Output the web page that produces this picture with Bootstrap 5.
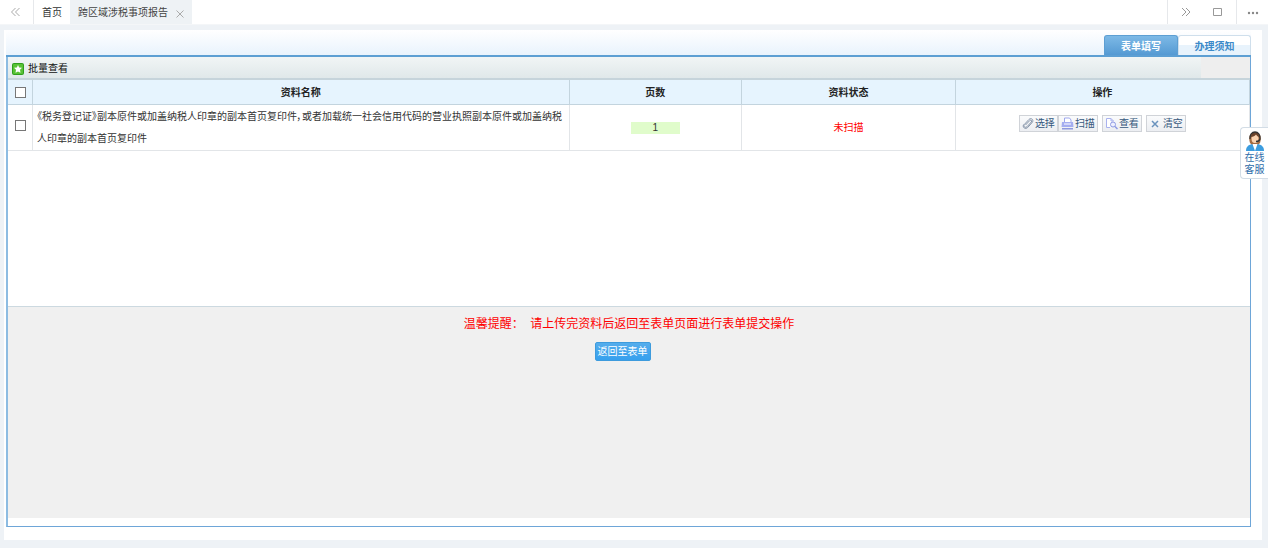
<!DOCTYPE html>
<html lang="zh-CN">
<head>
<meta charset="utf-8">
<meta name="viewport" content="width=device-width, initial-scale=1">
<title>跨区域涉税事项报告</title>
<link href="https://cdn.jsdelivr.net/npm/bootstrap@5.3.0/dist/css/bootstrap.min.css" rel="stylesheet">
<style>
body{font-family:"Liberation Sans","Noto Sans CJK SC",sans-serif;font-size:10px;line-height:16px;color:#333;background:#eef2f6}
a{text-decoration:none;color:inherit}
.plain-btn{border:0;background:none;padding:0;color:#999;line-height:0}
.top-bar{height:25px;border-bottom:1px solid #f4f6f8}
.top-bar .slot{border-color:#e6e8eb!important}
.top-tab{padding-top:2px}
.top-tab.current{background:#eef2f5;color:#444}
.panel{margin:5px 6px 0 4px;padding:0 11px 13px 2px}
.tab-strip{height:27px;padding-top:5px;background:linear-gradient(#fff,#e9f3fd);border-bottom:2px solid #5d9fd3}
.form-tab{width:73px;border:1px solid #cfdfec;border-bottom:0;border-radius:3px 3px 0 0;font-weight:700;line-height:22px;color:#3c8ac9;background:linear-gradient(#fff 45%,#e8f3fc 50%)}
.form-tab.current{width:74px;border-color:#5d9fd3;color:#fff;background:linear-gradient(#7db9e6,#559ad3)}
.frame{border:1px solid #6ea6d8;border-left-width:2px;border-left-color:#8dbce2;border-top:0;padding-bottom:8px}
.tools{height:23px;background:linear-gradient(#f1f5f5,#e0e8ea);border-bottom:2px solid #c6d4db;color:#111}
.tools .plain-btn{padding-top:2px}
.tools .rest{width:49px;background:#eee}
.list-area{height:227px;border-bottom:1px solid #ccd9e0}
.docs{table-layout:fixed;width:100%;margin:0;color:#333;border-collapse:separate;border-spacing:0}
.docs th,.docs td{border-right:1px solid #e2e5e8;border-bottom:1px solid #e2e5e8;padding:0 4px;vertical-align:middle}
.docs th{height:25px;padding-top:1px;background:#e6f4fe;border-color:#c3d4de;text-align:center;color:#222;line-height:16px}
.docs td{height:46px;line-height:22px}
.docs .tick{padding:0;text-align:center}
.docs input[type=checkbox]{width:11px;height:11px;border:1px solid #777;border-radius:0;background-color:#fff;display:block;margin:0 auto}
.docs td.tick{padding-bottom:4px}
.c-tick{width:25px}.c-name{width:43.2%}.c-page{width:13.9%}.c-state{width:17.2%}
.doc-name{font-feature-settings:"palt"}
.page-no{width:49px;height:12px;line-height:12px;background:#e0fccb;margin:0 auto}
.docs .alarm,.notice{color:#f00}
.op{height:17px;padding:0 2px;border:1px solid #d0d3d8;background:linear-gradient(#fafbfc,#eceef2);color:#36587d;line-height:15px;display:flex;align-items:center;gap:1px;white-space:nowrap}
.bottom-area{background:#f0f0f0}
.notice{font-size:12px;line-height:18px;white-space:pre-wrap;padding-top:8px}
.back-btn{margin:9px 13px 0 0;height:19px;padding:0 2px;border:1px solid #3d9bdd;border-radius:2px;background:linear-gradient(#55adec,#36a0ee);color:#fff;line-height:17px}
.service{top:127px;width:28px;height:52px;border:1px solid #d3dde6;border-right:0;border-radius:4px 0 0 4px;line-height:12px;color:#2d6ba8;padding-top:3px}
.service svg{margin-bottom:1px}
</style>
</head>
<body class="min-vh-100 d-flex flex-column">
<header class="top-bar bg-white d-flex align-items-stretch">
  <button class="plain-btn slot border-end px-2" aria-label="向左"><svg width="17" height="12" viewBox="0 0 17 12" fill="none" stroke="#aaa"><path d="M7.500 2 3.500 6l4 4M11.500 2l-4 4 4 4"/></svg></button>
  <nav class="d-flex flex-grow-1">
    <a href="#" class="top-tab px-2 d-flex align-items-center">首页</a>
    <div class="top-tab current ps-2 pe-2 d-flex align-items-center gap-2"><a href="#">跨区域涉税事项报告</a><button class="plain-btn" aria-label="关闭"><svg width="8" height="10" viewBox="0 0 8 10" stroke="#aaa"><path d="m.5 2.500 7 7m0-7-7 7"/></svg></button></div>
  </nav>
  <div class="d-flex slot border-start">
    <button class="plain-btn ps-2" aria-label="向右"><svg width="18" height="12" viewBox="0 0 18 12" fill="none" stroke="#999"><path d="m6 2 4 4-4 4M10 2l4 4-4 4"/></svg></button>
    <button class="plain-btn ps-3 pe-2" aria-label="全屏"><svg width="18" height="12" viewBox="0 0 18 12" fill="none" stroke="#999"><path d="M3.500 2.500h8v7h-8z"/></svg></button>
  </div>
  <button class="plain-btn slot border-start ps-2 pe-2" aria-label="更多"><svg width="15" height="12" viewBox="0 0 15 12" fill="#888"><circle cx="4" cy="7" r="1.200"/><circle cx="8" cy="7" r="1.200"/><circle cx="12" cy="7" r="1.200"/></svg></button>
</header>

<main class="panel bg-white flex-grow-1 d-flex flex-column mb-2">
  <nav class="tab-strip d-flex justify-content-end">
    <a href="#" class="form-tab current text-center">表单填写</a>
    <a href="#" class="form-tab text-center">办理须知</a>
  </nav>
  <div class="frame flex-grow-1 d-flex flex-column">
    <div class="tools d-flex justify-content-between">
      <button class="plain-btn text-reset d-flex align-items-center gap-1 ps-1"><svg width="12" height="12" viewBox="0 0 12 12"><rect width="12" height="12" rx="2" fill="#2f9e1c"/><rect x="1" y="1" width="10" height="10" rx="1" fill="#58c235"/><path fill="#fff" d="m6 2 1.200 2.500 2.800.3-2 2 .5 2.900L6 8.400 3.500 9.700 4 6.800l-2-2 2.800-.3z"/></svg><span>批量查看</span></button>
      <span class="rest"></span>
    </div>
    <div class="list-area">
      <table class="docs">
        <colgroup><col class="c-tick"><col class="c-name"><col class="c-page"><col class="c-state"><col></colgroup>
        <thead><tr><th class="tick"><input class="form-check-input" type="checkbox" aria-label="全选"></th><th>资料名称</th><th>页数</th><th>资料状态</th><th>操作</th></tr></thead>
        <tbody><tr>
          <td class="tick"><input class="form-check-input" type="checkbox" aria-label="选择此资料"></td>
          <td class="doc-name">《税务登记证》副本原件或加盖纳税人印章的副本首页复印件&#xFF0C;或者加载统一社会信用代码的营业执照副本原件或加盖纳税人印章的副本首页复印件</td>
          <td class="text-center"><div class="page-no">1</div></td>
          <td class="text-center alarm">未扫描</td>
          <td><div class="d-flex justify-content-center gap-1 pb-2">
            <div class="d-flex">
              <button class="op"><svg width="12" height="13" viewBox="0 0 12 13" fill="none" stroke="#8493a8"><path d="m3.500 8 4.300-4.500c1.200-1 2.500.2 1.500 1.500L5 9.700c-1.700 1.600-4.200-.2-2.600-2.300L7 2.400c2.200-2 5.200.4 3.200 3L5.700 10.500c-2.400 2.300-5.700-.2-4-3"/></svg>选择</button>
              <button class="op"><svg width="13" height="13" viewBox="0 0 13 13"><path d="M3.500 5V1h5l1.500 2v2" fill="#fff" stroke="#9ea7ed"/><path d="M1 5h11l.5 5h-12z" fill="#a4adf0"/><path d="M3 7h7M1.500 11.500h10" stroke="#fff"/><path d="M1 11h11v1.500H1z" fill="#8e99df"/></svg>扫描</button>
            </div>
            <button class="op"><svg width="13" height="13" viewBox="0 0 13 13" fill="none" stroke="#a9b2ee"><path d="M5 10.500H1.500v-9H6L8.500 4M6 1.500V4h2.500" fill="#fff"/><circle cx="8" cy="7.500" r="2.500" fill="#eef0ff" stroke="#8e9be4"/><path d="m10 9.500 2.500 2.500" stroke="#8e9be4" stroke-width="1.500"/></svg>查看</button>
            <button class="op"><svg width="13" height="13" viewBox="0 0 13 13" fill="none" stroke="#6b93bd" stroke-width="1.500"><path d="m3 4 6 6m0-6-6 6"/></svg>清空</button>
          </div></td>
        </tr></tbody>
      </table>
    </div>
    <div class="bottom-area flex-grow-1 text-center">
      <p class="notice m-0">温馨提醒&#xFF1A;  请上传完资料后返回至表单页面进行表单提交操作</p>
      <button class="back-btn">返回至表单</button>
    </div>
  </div>
</main>

<a href="#" class="service position-absolute end-0 bg-white d-flex flex-column align-items-center"><svg width="18" height="20" viewBox="0 0 18 20"><path d="M4 12C2 6 4 1 9 1s7 5 5 11l-2 2H6z" fill="#a36b42"/><ellipse cx="9" cy="7.500" rx="3.500" ry="4.500" fill="#fbd3b0"/><path d="M5 6c2 0 4-1 5-2.500C11 5 12 6 13 6c0-3-1.500-4.500-4-4.500S5 3 5 6" fill="#6b432b"/><path d="M4 8C3.500 3.500 6 1 9 1s5.500 2.500 5 7c-.5 2-2 2.500-4 2.500" fill="none" stroke="#333" stroke-width="1.300"/><path d="M0 20c0-4 2-6 6-7l3 3 3-3c4 1 6 3 6 7z" fill="#3d9ddf"/><path d="m6.500 13 2.500 7 2.500-7z" fill="#fff"/></svg><span>在线</span><span>客服</span></a>
<script src="https://cdn.jsdelivr.net/npm/bootstrap@5.3.0/dist/js/bootstrap.bundle.min.js"></script>
</body>
</html>
